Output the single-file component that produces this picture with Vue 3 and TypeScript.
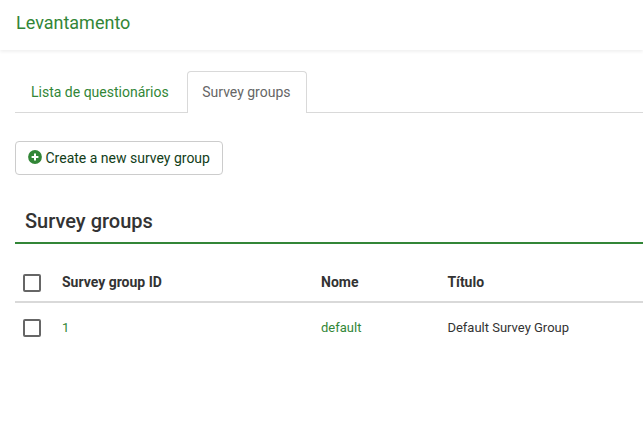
<script setup lang="ts">
import { ref } from 'vue'

interface SurveyGroup {
  id: number
  name: string
  title: string
}

const tabs: string[] = ['Lista de questionários', 'Survey groups']
const activeTab = ref(1)
const groups: SurveyGroup[] = [{ id: 1, name: 'default', title: 'Default Survey Group' }]
</script>

<template>
  <div class="page">
    <header class="topbar"><h1>Levantamento</h1></header>
    <main>
      <nav class="tabs">
        <a
          v-for="(tab, i) in tabs"
          :key="tab"
          class="tab"
          :class="{ active: i === activeTab }"
          @click="activeTab = i"
        >{{ tab }}</a>
      </nav>
      <button class="create" type="button">
        <svg class="plus" viewBox="0 0 14 14" aria-hidden="true">
          <circle cx="7" cy="7" r="6.9" fill="#328637" />
          <path d="M7 3.6v6.8M3.6 7h6.8" stroke="#fff" stroke-width="2" />
        </svg>
        <span>Create a new survey group</span>
      </button>
      <h2>Survey groups</h2>
      <div class="row head">
        <input type="checkbox" class="check" />
        <span>Survey group ID</span>
        <span>Nome</span>
        <span>Título</span>
      </div>
      <div v-for="group in groups" :key="group.id" class="row">
        <input type="checkbox" class="check" />
        <a>{{ group.id }}</a>
        <a>{{ group.name }}</a>
        <span>{{ group.title }}</span>
      </div>
    </main>
  </div>
</template>

<style>
body {
  background: #fff;
  overflow: hidden;
}
</style>

<style scoped>
.page {
  height: 428px;
  overflow: hidden;
  font-family: Roboto, 'Liberation Sans', sans-serif;
  font-size: 14px;
  line-height: 20px;
  color: #333;
}
.topbar {
  height: 50px;
  box-sizing: border-box;
  padding: 11px 16px 0;
  box-shadow: 0 2px 3px rgba(0, 0, 0, 0.06);
}
h1 {
  margin: 0;
  font-size: 18px;
  line-height: 24px;
  font-weight: 400;
  color: #328637;
}
main {
  padding: 21px 0 0 15px;
}
.tabs {
  display: flex;
  gap: 2px;
  height: 41px;
  border-bottom: 1px solid #d9d9d9;
}
.tab {
  box-sizing: border-box;
  height: 42px;
  padding: 10px 15px;
  border: 1px solid transparent;
  border-bottom: 0;
  border-radius: 4px 4px 0 0;
  color: #328637;
  cursor: pointer;
}
.tab.active {
  padding: 10px 15.4px 10px 14.6px;
  background: #fff;
  border-color: #d9d9d9;
  color: #666;
}
.create {
  display: flex;
  align-items: center;
  gap: 3.5px;
  box-sizing: border-box;
  width: 208px;
  height: 34px;
  margin: 28px 0 0;
  padding: 0 12px;
  border: 1px solid #ccc;
  border-radius: 4px;
  background: #fff;
  font: inherit;
  color: #123d19;
  white-space: nowrap;
}
.plus {
  flex: none;
  width: 14px;
  height: 14px;
  margin-top: -2px;
}
h2 {
  box-sizing: border-box;
  height: 69px;
  margin: 0;
  padding: 34px 10px 0;
  border-bottom: 2px solid #328637;
  font-size: 20px;
  line-height: 24px;
  font-weight: 500;
}
.row {
  display: grid;
  grid-template-columns: 39px 259px 126.4px 1fr;
  align-items: center;
  height: 50px;
  padding-left: 8px;
  font-size: 13px;
}
.row a {
  color: #328637;
}
.head {
  box-sizing: border-box;
  height: 59px;
  padding-top: 20px;
  border-bottom: 2px solid #d9d9d9;
  font-size: 14px;
  font-weight: 700;
}
.head span {
  margin-top: -2px;
}
.check {
  appearance: none;
  box-sizing: border-box;
  width: 18px;
  height: 18px;
  margin: 0;
  border: 2px solid #666;
  border-radius: 2px;
}
</style>
